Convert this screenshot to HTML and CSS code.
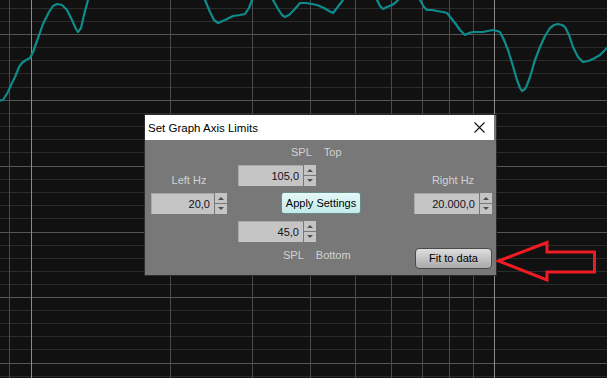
FILE: index.html
```html
<!DOCTYPE html>
<html>
<head>
<meta charset="utf-8">
<link rel="stylesheet" href="styles.css">
</head>
<body>
<div class="screen">
  <svg class="graph" width="607" height="378" viewBox="0 0 607 378">
    <g class="hminor">
      <line x1="0" x2="607" y1="8.5" y2="8.5"/><line x1="0" x2="607" y1="21.5" y2="21.5"/>
      <line x1="0" x2="607" y1="47.5" y2="47.5"/><line x1="0" x2="607" y1="60.5" y2="60.5"/><line x1="0" x2="607" y1="73.5" y2="73.5"/><line x1="0" x2="607" y1="87.5" y2="87.5"/>
      <line x1="0" x2="607" y1="113.5" y2="113.5"/><line x1="0" x2="607" y1="126.5" y2="126.5"/><line x1="0" x2="607" y1="139.5" y2="139.5"/><line x1="0" x2="607" y1="152.5" y2="152.5"/>
      <line x1="0" x2="607" y1="179.5" y2="179.5"/><line x1="0" x2="607" y1="192.5" y2="192.5"/><line x1="0" x2="607" y1="205.5" y2="205.5"/><line x1="0" x2="607" y1="218.5" y2="218.5"/>
      <line x1="0" x2="607" y1="245.5" y2="245.5"/><line x1="0" x2="607" y1="258.5" y2="258.5"/><line x1="0" x2="607" y1="271.5" y2="271.5"/><line x1="0" x2="607" y1="284.5" y2="284.5"/>
      <line x1="0" x2="607" y1="310.5" y2="310.5"/><line x1="0" x2="607" y1="323.5" y2="323.5"/><line x1="0" x2="607" y1="336.5" y2="336.5"/><line x1="0" x2="607" y1="349.5" y2="349.5"/>
      <line x1="0" x2="607" y1="376.5" y2="376.5"/>
    </g>
    <g class="hmajor">
      <line x1="0" x2="607" y1="34.5" y2="34.5"/><line x1="0" x2="607" y1="100.5" y2="100.5"/><line x1="0" x2="607" y1="166.5" y2="166.5"/>
      <line x1="0" x2="607" y1="232.5" y2="232.5"/><line x1="0" x2="607" y1="297.5" y2="297.5"/><line x1="0" x2="607" y1="363.5" y2="363.5"/>
    </g>
    <g class="vminor">
      <line y1="0" y2="378" x1="9.5" x2="9.5"/><line y1="0" y2="378" x1="170.5" x2="170.5"/><line y1="0" y2="378" x1="252.5" x2="252.5"/>
      <line y1="0" y2="378" x1="310.5" x2="310.5"/><line y1="0" y2="378" x1="355.5" x2="355.5"/><line y1="0" y2="378" x1="391.5" x2="391.5"/>
      <line y1="0" y2="378" x1="422.5" x2="422.5"/><line y1="0" y2="378" x1="449.5" x2="449.5"/><line y1="0" y2="378" x1="473.5" x2="473.5"/>
    </g>
    <g class="vmajor">
      <line y1="0" y2="378" x1="31.5" x2="31.5"/><line y1="0" y2="378" x1="494.5" x2="494.5"/>
    </g>
    <polyline class="curve" points="-2,101 3,100 8,92 12,83 15,77 19,67 22,63 26,60 30,58 33,52 37,41 43,24 49,12 53,6 57,4 62,5 67,10 72,20 76,29 78,32 81,28 84,15 88,0 92,-12 200,-12 205,0 210,12 214,20 218,23 225,20 233,16 240,15 245,14 249,8 252,0 256,-10 270,-10 273,0 278,9 282,15 285,17 289,15 294,10 300,3 306,3 312,4 317,5 324,8 329,11 333,13 337,8 340,4 343,0 346,-10 374,-10 377,0 380,6 383,9 387,7 392,5 395,3 398,0 401,-6 416,-6 420,0 424,7 427,10 432,10 437,11 443,12 447,13 451,18 455,23 460,30 465,35 469,33 473,32 478,32 483,32 488,31 493,30 497,31 500,32 504,40 508,50 512,63 517,80 520,88 522,91 525,89 527,85 530,77 535,60 540,47 545,36 550,28 554,25 558,24 562,25 565,27 569,35 573,47 578,57 583,62 588,61 593,59 600,55 607,48"/>
  </svg>

  <div class="dialog">
    <div class="titlebar">
      <span class="title">Set Graph Axis Limits</span>
      <svg class="close" width="11" height="11" viewBox="0 0 11 11"><path d="M0.5 0.5L10.5 10.5M10.5 0.5L0.5 10.5"/></svg>
    </div>
    <div class="body">
      <div class="col col-side">
        <div class="label">Left Hz</div>
        <div class="spin spin-narrow">
          <div class="field">20,0</div>
          <div class="spinner"><span class="up"></span><span class="down"></span></div>
        </div>
      </div>
      <div class="col col-mid">
        <div class="label pair pair-top"><span>SPL</span><span>Top</span></div>
        <div class="spin">
          <div class="field">105,0</div>
          <div class="spinner"><span class="up"></span><span class="down"></span></div>
        </div>
        <button class="btn apply">Apply Settings</button>
        <div class="spin spin-bottom">
          <div class="field">45,0</div>
          <div class="spinner"><span class="up"></span><span class="down"></span></div>
        </div>
        <div class="label pair pair-bottom"><span>SPL</span><span>Bottom</span></div>
      </div>
      <div class="col col-side col-right">
        <div class="label">Right Hz</div>
        <div class="spin">
          <div class="field">20.000,0</div>
          <div class="spinner"><span class="up"></span><span class="down"></span></div>
        </div>
        <button class="btn fit">Fit to data</button>
      </div>
    </div>
  </div>

  <svg class="arrow" width="110" height="50" viewBox="493 236 110 50">
    <polygon points="498.5,261 547,242.5 547,252 594.5,252 594.5,272 547,272 547,280 498.5,261"/>
  </svg>
</div>
</body>
</html>
```

FILE: styles.css
```css
html, body {
  margin: 0;
  padding: 0;
  background: #111111;
}

.screen {
  position: relative;
  width: 607px;
  height: 378px;
  overflow: hidden;
  background: #111111;
  font-family: "Liberation Sans", Arial, sans-serif;
}

.graph {
  position: absolute;
  left: 0;
  top: 0;
  display: block;
}

.hminor line { stroke: #2b2b2b; stroke-width: 1; }
.hmajor line { stroke: #555555; stroke-width: 1; }
.vminor line { stroke: #4a4a4a; stroke-width: 1; }
.vmajor line { stroke: #8a8a8a; stroke-width: 1; }

.curve {
  fill: none;
  stroke: #0f8b8b;
  stroke-width: 2.2;
  stroke-linejoin: round;
  stroke-linecap: round;
}

.dialog {
  position: absolute;
  left: 145px;
  top: 115px;
  width: 351px;
  background: #787878;
  box-shadow: 0 0 0 1px #2c2c2c;
}

.titlebar {
  height: 25px;
  background: #ffffff;
  display: flex;
  align-items: center;
  justify-content: space-between;
  padding: 0 9px 0 3px;
  margin-right: 2px;
}

.title {
  font-size: 11.5px;
  color: #000000;
  padding-top: 1px;
}

.close path {
  stroke: #111111;
  stroke-width: 1.1;
  fill: none;
}

.body {
  height: 135px;
  display: flex;
  padding-left: 6px;
  box-sizing: border-box;
}

.col {
  display: flex;
  flex-direction: column;
}

.col-side {
  padding-top: 34px;
  align-items: center;
}

.col-mid {
  width: 123px;
  margin-left: 11px;
  padding-top: 6px;
}

.col-right {
  margin-left: 53px;
  width: 78px;
}

.label {
  font-size: 11px;
  line-height: 13px;
  color: #d2d2d2;
  height: 13px;
}

.pair {
  display: flex;
  gap: 12px;
}

.pair-top {
  margin-left: 53px;
}

.pair-bottom {
  margin-left: 45px;
  margin-top: 7px;
}

.spin {
  display: flex;
  width: 78px;
  height: 21px;
  gap: 1px;
  margin-top: 6px;
}

.spin-narrow {
  width: 76px;
}

.spin-bottom {
  margin-top: 7px;
}

.field {
  flex: 1;
  background: #c5c5c5;
  border-top: 1px solid #a9a9a9;
  border-left: 1px solid #a9a9a9;
  font-size: 11px;
  line-height: 20px;
  text-align: right;
  padding-right: 4px;
  color: #141020;
}

.spinner {
  width: 12px;
  display: flex;
  flex-direction: column;
  gap: 1px;
}

.spinner span {
  flex: 1;
  background: #c4c4c4;
  position: relative;
}

.spinner span::after {
  content: "";
  position: absolute;
  left: 3px;
  top: 4px;
  border-left: 3px solid transparent;
  border-right: 3px solid transparent;
}

.spinner .up::after {
  border-bottom: 3px solid #4e4e4e;
}

.spinner .down::after {
  top: 3px;
  border-top: 3px solid #4e4e4e;
}

.btn {
  font-family: "Liberation Sans", Arial, sans-serif;
  font-size: 11px;
  color: #000000;
  padding: 0;
  margin: 0;
  box-sizing: border-box;
  cursor: default;
}

.apply {
  align-self: flex-end;
  width: 80px;
  height: 22px;
  margin-top: 6px;
  border: 1px solid #6c8c8c;
  border-radius: 3px;
  background: linear-gradient(#e6f8f8, #c2eaea);
  line-height: 20px;
}

.fit {
  width: 77px;
  height: 21px;
  margin-top: 34px;
  margin-left: 1px;
  border: 1px solid #4a4a4a;
  border-radius: 4px;
  background: linear-gradient(#dedede, #a9a9a9);
  line-height: 19px;
}

.arrow {
  position: absolute;
  left: 493px;
  top: 236px;
  display: block;
}

.arrow polygon {
  fill: none;
  stroke: #ed1c24;
  stroke-width: 3;
  stroke-linejoin: miter;
}
```
